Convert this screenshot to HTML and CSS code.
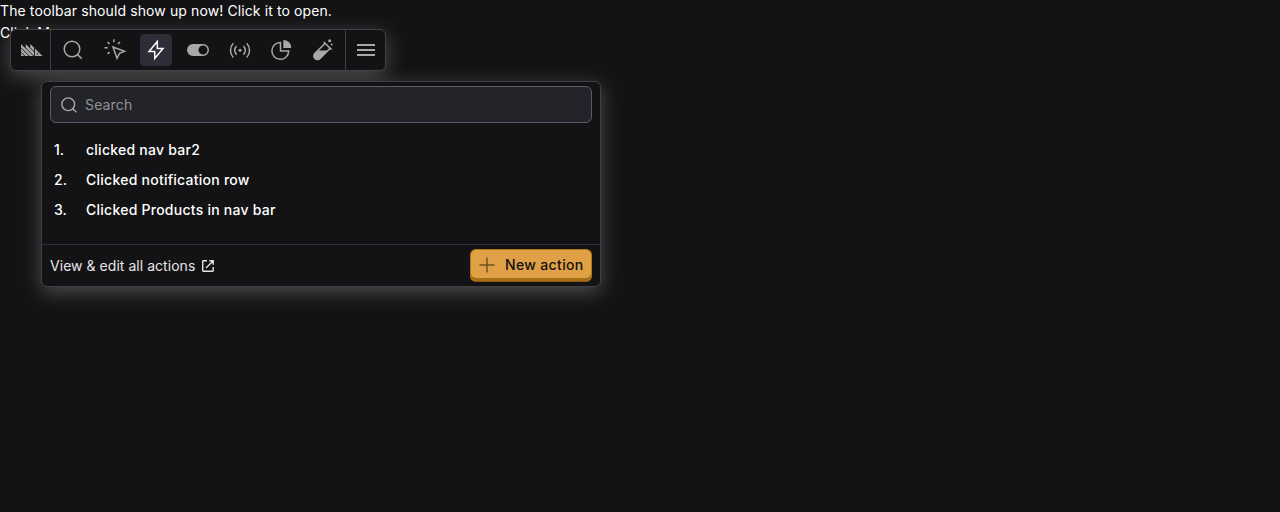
FILE: index.html
```html
<!DOCTYPE html>
<html lang="en">
<head>
<meta charset="utf-8">
<title>Toolbar</title>
<link rel="stylesheet" href="styles.css">
</head>
<body>
<div class="page-text">The toolbar should show up now! Click it to open.</div>
<div class="page-text">Click Me</div>

<nav class="toolbar">
  <div class="cell logo">
    <svg width="22" height="12" viewBox="0 0 22 12"><path class="solid" d="M0 0L4.700 4.700V0L9.300 4.600V0L21.500 12H0Z"/><path class="stripe" d="M0 3.800L8.200 12M0 8.200L3.800 12M4.700 4L12.700 12M9.300 4L13.400 8.100M13.500 4V12"/><path class="eye" d="M15.800 9.200H17.200V10.500H15.800Z"/></svg>
  </div>
  <div class="tools">
    <button class="tool"><svg width="24" height="24" viewBox="0 0 24 24"><circle cx="11" cy="11" r="7.800"/><path d="M16.600 16.600L20.800 20.800"/></svg></button>
    <button class="tool"><svg width="24" height="24" viewBox="0 0 24 24"><path d="M10 9L21.500 13.300L16.500 15.300L14 20.300ZM10.900 1.300V4.300M4.600 3.900L6.600 6M17 3.900L15 6M1.500 9.800H4.700M4.600 16L6.600 13.900"/></svg></button>
    <button class="tool active"><svg width="24" height="24" viewBox="0 0 24 24"><path d="M13.300 3.600L5 13.600H10.800V20.500L19 10.400H13.300Z"/></svg></button>
    <button class="tool"><svg width="24" height="24" viewBox="0 0 24 24"><path class="solid" fill-rule="evenodd" d="M7 6H17A6 6 0 0 1 17 18H7A6 6 0 0 1 7 6ZM17 7.500A4.500 4.500 0 0 0 17 16.500A4.500 4.500 0 0 0 17 7.500Z"/></svg></button>
    <button class="tool"><svg width="24" height="24" viewBox="0 0 24 24"><circle class="solid" cx="12" cy="12.300" r="1.500"/><path d="M8.600 8A5.800 5.800 0 0 0 8.600 16.600M15.400 8A5.800 5.800 0 0 1 15.400 16.600M5.300 5.200A10.300 10.300 0 0 0 5.300 19.400M18.700 5.200A10.300 10.300 0 0 1 18.700 19.400"/></svg></button>
    <button class="tool"><svg width="24" height="24" viewBox="0 0 24 24"><path d="M11.500 4.500A8.400 8.400 0 1 0 19.700 13H11.500Z"/><path class="solid" d="M14.300 2A8 8 0 0 1 22.300 10H14.300Z"/></svg></button>
    <button class="tool"><svg width="24" height="24" viewBox="0 0 24 24"><path d="M12.700 4L20.600 11.600M14 5.500L4 15.400A3.500 3.500 0 0 0 9 20.500L19 10.400"/><path class="solid" d="M7.300 12.500H17.200L9.500 20.800A4 4 0 0 1 3.300 15.800Z"/><circle class="solid" cx="18.700" cy="2.700" r="1.500"/><circle class="solid" cx="20.700" cy="6.400" r="1"/></svg></button>
  </div>
  <div class="cell menu">
    <svg width="18" height="12" viewBox="0 0 18 12"><path class="solid" d="M0 0H18V2H0ZM0 5H18V7H0ZM0 10H18V12H0Z"/></svg>
  </div>
</nav>

<section class="panel">
  <label class="search">
    <svg width="18" height="18" viewBox="0 0 24 24"><circle cx="11" cy="11" r="8.500"/><path d="M17 17L21.800 21.800"/></svg>
    <span>Search</span>
  </label>
  <div class="list">
    <div class="row"><span class="num">1.</span><span>clicked nav bar2</span></div>
    <div class="row"><span class="num">2.</span><span>Clicked notification row</span></div>
    <div class="row"><span class="num">3.</span><span>Clicked Products in nav bar</span></div>
  </div>
  <footer class="footer">
    <a class="link">View &amp; edit all actions
      <svg width="12" height="12" viewBox="0 0 12 12"><path d="M5 .8H1.400Q.7.8.7 1.500V10.600Q.7 11.300 1.400 11.300H10.500Q11.200 11.300 11.200 10.600V7M7.300.8H11.200V4.700M11 1L4 8"/></svg></a>
    <button class="new"><svg width="16" height="16" viewBox="0 0 16 16"><path d="M8 .5V15.500M.5 8H15.500"/></svg><span>New action</span></button>
  </footer>
</section>
</body>
</html>
```
FILE: styles.css
```css
* { box-sizing: border-box; }
body {
  margin: 0;
  height: 512px;
  overflow: hidden;
  background: #131315;
  color: #fff;
  font: 14px/22px Inter, sans-serif;
}
button { margin: 0; padding: 0; border: 0; font: inherit; background: none; }
svg { display: block; flex: none; fill: none; stroke: #a8a8a8; stroke-width: 1.5; }
.solid { fill: #a8a8a8; stroke: none; }
.page-text { height: 22px; letter-spacing: .11px; }
.toolbar, .panel {
  position: absolute;
  background: #131315;
  border: 1px solid #404044;
  box-shadow: 0 5px 20px rgba(255, 255, 255, .25);
}
.toolbar {
  left: 10px;
  top: 29px;
  width: 376px;
  height: 42px;
  display: flex;
  border-radius: 6px;
}
.cell { display: flex; align-items: center; justify-content: center; width: 40px; }
.logo { border-right: 1px solid #404044; padding-left: 2px; }
.stripe { stroke: #131315; stroke-width: .9; }
.eye { fill: #131315; stroke: none; }
.menu { border-left: 1px solid #404044; }
.tools { flex: 1; display: flex; align-items: center; justify-content: space-between; padding: 0 6px; }
.tool { width: 32px; height: 32px; display: flex; align-items: center; justify-content: center; border-radius: 4px; }
.active { background: #2d2d37; }
.active svg { stroke: #fff; }
.panel {
  left: 41px;
  top: 81px;
  width: 560px;
  height: 206px;
  display: flex;
  flex-direction: column;
  border-radius: 6px;
}
.search {
  display: flex;
  align-items: center;
  gap: 7px;
  height: 37px;
  margin: 4px 8px 0;
  padding-left: 9px;
  border: 1px solid #5a5b69;
  border-radius: 6px;
  background: #232429;
  color: #929295;
  letter-spacing: .15px;
}
.search svg { stroke-width: 1.9; }
.list { flex: 1; padding: 12px 12px 11px; font-weight: 500; letter-spacing: .25px; }
.row { display: flex; height: 30px; line-height: 30px; }
.num { width: 32px; letter-spacing: 0; }
.footer {
  display: flex;
  align-items: center;
  justify-content: space-between;
  height: 42px;
  padding: 0 8px;
  border-top: 1px solid #303036;
}
.link { display: flex; align-items: center; gap: 7px; color: #e5e5e5; letter-spacing: .04px; }
.link svg { stroke: #e5e5e5; stroke-width: 1.4; }
.new {
  display: flex;
  align-items: center;
  gap: 10px;
  width: 122px;
  height: 33px;
  padding: 0 0 2px 8px;
  border: 1px solid #b17816;
  border-bottom-color: #8e5b0c;
  border-radius: 6px;
  background: #e0a045;
  box-shadow: inset 0 -3px #a56f18;
  color: #111;
  font-weight: 500;
  letter-spacing: .35px;
}
.new svg { stroke: #6d501f; stroke-width: 1.4; }
```
